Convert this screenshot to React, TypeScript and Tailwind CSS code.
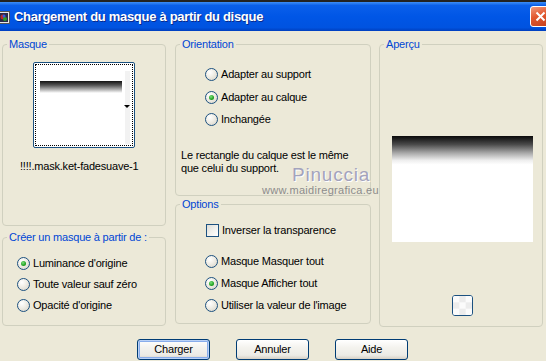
import React from "react";

const F = "font-['Liberation_Sans',Arial,sans-serif]";

function Radio({ checked }: { checked?: boolean }) {
  return (
    <span className="relative flex h-[13px] w-[13px] shrink-0 items-center justify-center rounded-full border border-[#1C5180] bg-[radial-gradient(circle_at_35%_30%,#ffffff_0%,#f1efe8_40%,#d6d2c6_100%)]">
      {checked && (
        <span className="h-[5px] w-[5px] rounded-full bg-[radial-gradient(circle_at_40%_35%,#7be07b_0%,#21a121_60%,#118811_100%)]" />
      )}
    </span>
  );
}

function Row({ checked, label, h = "h-[22px]" }: { checked?: boolean; label: string; h?: string }) {
  return (
    <div className={`flex items-center gap-[3px] ${h}`}>
      <Radio checked={checked} />
      <span>{label}</span>
    </div>
  );
}

function Group({ title, className, children }: { title: string; className: string; children?: React.ReactNode }) {
  return (
    <div className={`relative rounded-[4px] border border-[#D0D0BF] ${className}`}>
      <span className="absolute -top-[8px] left-[4px] bg-[#ECE9D8] px-[2px] leading-[14px] text-[#0046D5]">{title}</span>
      {children}
    </div>
  );
}

function Btn({ label, def }: { label: string; def?: boolean }) {
  return (
    <div
      className={`flex h-[21px] w-[73px] items-center justify-center rounded-[3px] border border-[#003C74] bg-[linear-gradient(180deg,#ffffff_0%,#f4f3ee_40%,#ecebe6_80%,#d6d0c5_100%)] ${
        def ? "shadow-[inset_0_0_0_1px_#b9d1f6,inset_0_0_0_2px_#89adeb]" : ""
      }`}
    >
      {label}
    </div>
  );
}

export default function App() {
  return (
    <div className={`${F} relative flex h-[361px] w-[546px] flex-col overflow-hidden bg-[#ECE9D8] text-[11px] leading-[13px] tracking-[-0.2px] text-black`}>
      <div className="h-[2px] bg-[#222]" />
      <div className="flex h-[29px] items-center bg-[linear-gradient(180deg,#3d8ef7_0%,#0a5fea_12%,#0056e6_50%,#0053e0_88%,#003fbf_100%)]">
        <svg width="12" height="13" viewBox="0 0 12 13" className="-ml-[2px] mt-[2px]">
          <rect x="0.5" y="0.5" width="11" height="12" fill="#e8e8e8" stroke="#555" />
          <rect x="2" y="2" width="8" height="9" fill="#2a2a4a" />
          <circle cx="5" cy="6" r="2.5" fill="#c02828" />
          <circle cx="7" cy="8" r="2" fill="#2aa02a" />
          <circle cx="6" cy="5" r="1.5" fill="#3060e0" />
        </svg>
        <span className="ml-[4px] text-[13px] font-bold tracking-[-0.3px] text-white [text-shadow:1px_1px_0_#0a2a8a]">
          Chargement du masque à partir du disque
        </span>
        <div className="-mr-[5px] mb-[1px] ml-auto flex h-[21px] w-[21px] items-center justify-center rounded-[3px] border border-white bg-[linear-gradient(160deg,#f09a7e_0%,#e2582f_45%,#c4401b_100%)]">
          <svg width="11" height="11" viewBox="0 0 11 11">
            <path d="M1.5 1.5 L9.5 9.5 M9.5 1.5 L1.5 9.5" stroke="white" strokeWidth="2" />
          </svg>
        </div>
      </div>

      <div className="flex pt-[13px]">
        {/* Left column */}
        <div className="ml-[2px] flex w-[164px] flex-col">
          <Group title="Masque" className="h-[182px]">
            <div className="ml-[30px] mt-[17px] h-[86px] w-[102px] rounded-[2px] border border-[#1C5180] bg-white p-[1px]">
              <div className="relative h-full w-full border border-dotted border-black">
                <div className="ml-[4px] mt-[16px] h-[12px] w-[82px] bg-[linear-gradient(180deg,#111_0%,#555_35%,#bbb_75%,#fff_100%)]" />
                <div className="absolute right-[2px] top-[6px] h-[73px] w-[5px] bg-[#f2f2f2]" />
                <div className="absolute right-[2px] top-[40px] h-0 w-0 border-l-[3px] border-r-[3px] border-t-[3px] border-l-transparent border-r-transparent border-t-black" />
              </div>
            </div>
            <div className="mt-[11px] pl-[17px] leading-[14px]">!!!!.mask.ket-fadesuave-1</div>
          </Group>
          <Group title="Créer un masque à partir de :" className="mt-[11px] h-[89px]">
            <div className="flex flex-col pl-[14px] pt-[15px]">
              <Row checked label="Luminance d'origine" h="h-[21px]" />
              <Row label="Toute valeur sauf zéro" h="h-[21px]" />
              <Row label="Opacité d'origine" h="h-[21px]" />
            </div>
          </Group>
        </div>

        {/* Middle column */}
        <div className="ml-[9px] flex w-[196px] flex-col">
          <Group title="Orientation" className="h-[152px]">
            <div className="flex flex-col pl-[29px] pt-[18px]">
              <Row label="Adapter au support" h="h-[23px]" />
              <Row checked label="Adapter au calque" />
              <Row label="Inchangée" />
            </div>
            <div className="mt-[19px] pl-[5px] leading-[13px]">
              <div>Le rectangle du calque est le même</div>
              <div>que celui du support.</div>
            </div>
          </Group>
          <Group title="Options" className="mt-[8px] h-[120px]">
            <div className="flex flex-col pl-[29px] pt-[14px]">
              <div className="flex h-[22px] items-center gap-[3px]">
                <span className="ml-[1px] h-[13px] w-[13px] shrink-0 border border-[#1C5180] bg-[linear-gradient(135deg,#dcdcd7_0%,#f0f0ec_50%,#ffffff_100%)]" />
                <span>Inverser la transparence</span>
              </div>
              <div className="mt-[9px] flex flex-col">
                <Row label="Masque Masquer tout" />
                <Row checked label="Masque Afficher tout" />
                <Row label="Utiliser la valeur de l'image" />
              </div>
            </div>
          </Group>
        </div>

        {/* Right column */}
        <div className="ml-[8px] w-[164px]">
          <Group title="Aperçu" className="h-[283px]">
            <div className="flex flex-col items-center pl-[2px] pt-[91px]">
              <div className="h-[106px] w-[141px] bg-[linear-gradient(180deg,#0a0a0a_0%,#4a4a4a_8%,#a8a8a8_16%,#eeeeee_23%,#ffffff_27%,#ffffff_100%)]" />
              <div className="mt-[53px] flex h-[21px] w-[21px] items-center justify-center overflow-hidden rounded-[3px] border border-[#1C5180] bg-white">
                <svg width="19" height="19" viewBox="0 0 18 18">
                  <rect width="18" height="18" fill="#fbfbfb" />
                  <rect x="6" y="0" width="6" height="6" fill="#ececec" />
                  <rect x="0" y="6" width="6" height="6" fill="#ececec" />
                  <rect x="12" y="6" width="6" height="6" fill="#ececec" />
                  <rect x="6" y="12" width="6" height="6" fill="#ececec" />
                </svg>
              </div>
            </div>
          </Group>
        </div>
      </div>

      <div className="ml-[137px] mt-[12px] flex gap-[26px]">
        <Btn label="Charger" def />
        <Btn label="Annuler" />
        <Btn label="Aide" />
      </div>

      {/* watermark */}
      <div className="pointer-events-none absolute left-[292px] top-[165px] text-[19px] leading-[20px] tracking-[0.8px] text-[#a3a3bc] [text-shadow:1px_1px_0_#ffffff]">
        Pinuccia
      </div>
      <div className="pointer-events-none absolute left-[262px] top-[185px] text-[11px] leading-[11px] tracking-[0.3px] text-[#8c8c8c]">
        www.maidiregrafica.eu
      </div>
    </div>
  );
}
